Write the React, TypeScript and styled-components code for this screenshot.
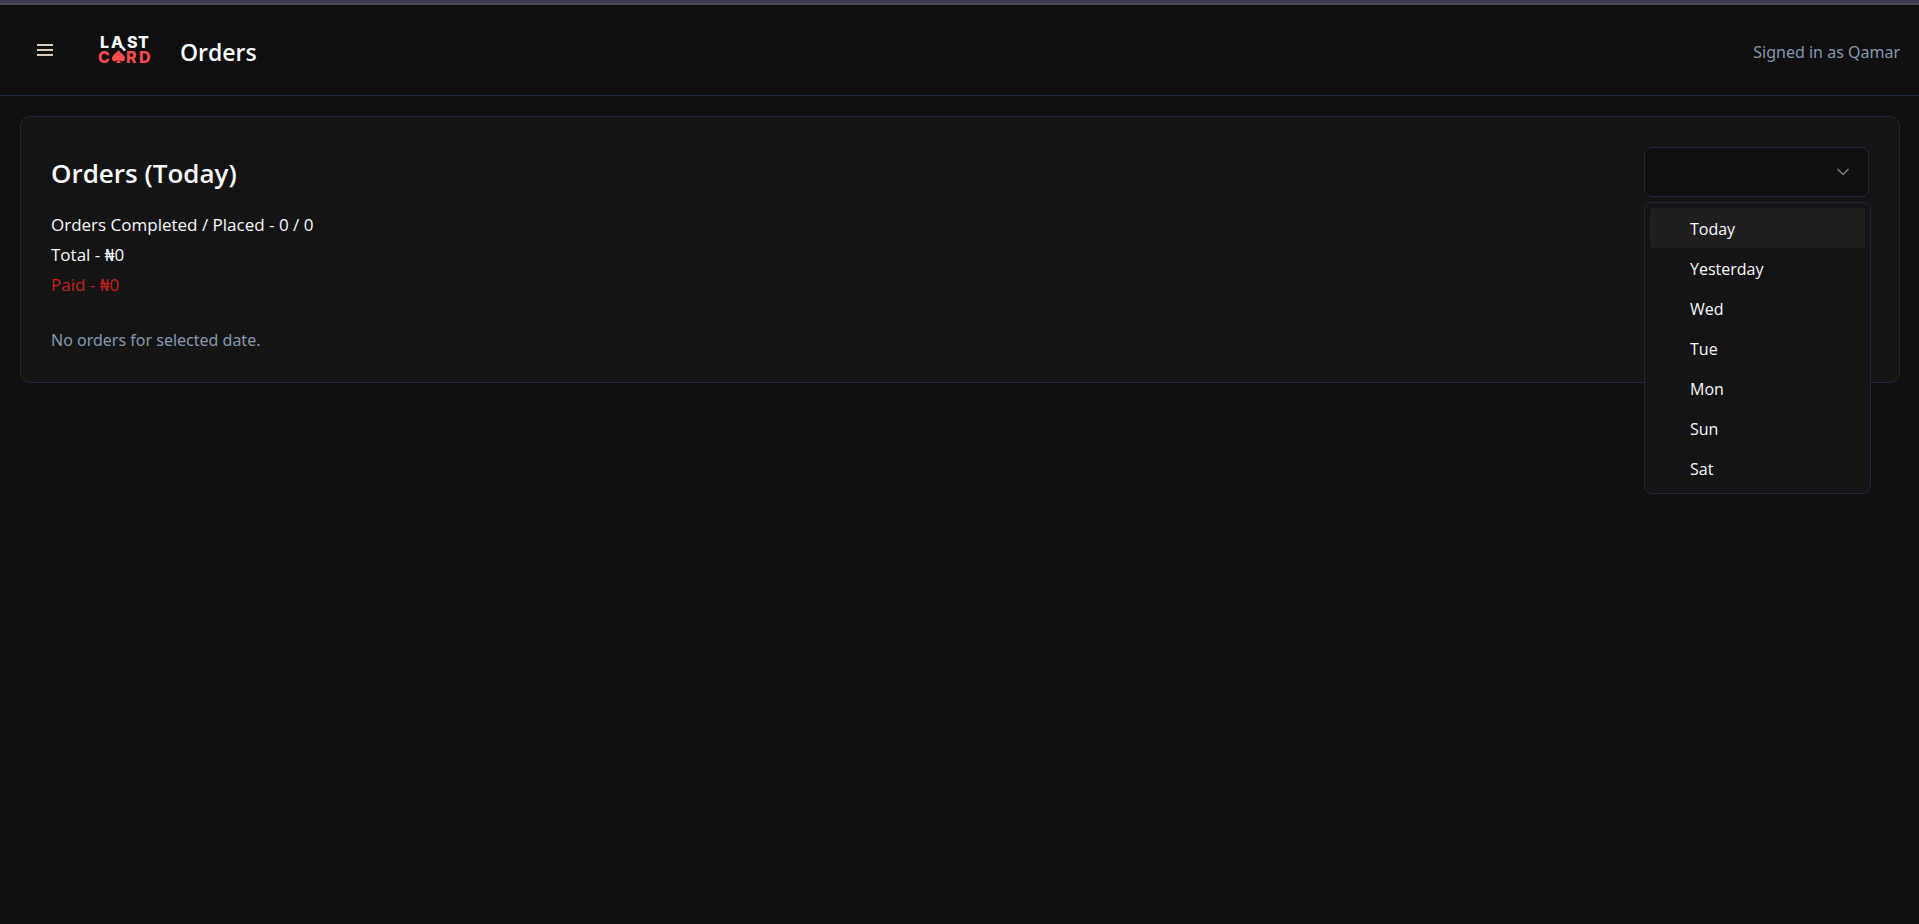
import React, { useState } from 'react';
import styled, { createGlobalStyle } from 'styled-components';

const color = {
  page: '#0f0f0f',
  card: '#141414',
  active: '#211e1f',
  border: '#1e293b',
  text: '#f8fafc',
  muted: '#8399b2',
  danger: '#c5221f',
  accent: '#d9ccb4',
  red: '#fb4b4e',
};

const GlobalStyle = createGlobalStyle`
  *, *::before, *::after { box-sizing: border-box; }
  body {
    margin: 0;
    background: ${color.page};
    color: ${color.text};
    font: 400 17px/30px "Segoe UI", "Open Sans", "Noto Sans", sans-serif;
  }
  button, select { font: inherit; color: inherit; }
  h1, h2, p, ul { margin: 0; padding: 0; }
`;

const Page = styled.div`
  min-height: 100vh;
  border-top: 3px solid #3d3b50;
`;

const Header = styled.header`
  display: flex;
  align-items: center;
  height: 93px;
  padding: 0 19px 0 20px;
  border-top: 2px solid #49484f;
  border-bottom: 1px solid ${color.border};
`;

const MenuButton = styled.button`
  display: flex;
  align-items: center;
  justify-content: center;
  width: 50px;
  height: 50px;
  padding: 0;
  border: 0;
  background: none;
  color: ${color.accent};
  cursor: pointer;
`;

const LogoLink = styled.a`
  display: flex;
  margin: 0 22px 0 25px;
`;

const LogoText = styled.text<{ $red?: boolean }>`
  font: 800 16px Inter, sans-serif;
  fill: ${(p) => (p.$red ? color.red : color.text)};
`;

const PageTitle = styled.h1`
  margin-right: auto;
  padding-top: 3px;
  font-size: 23px;
  font-weight: 600;
  line-height: 36px;
`;

const Muted = styled.p`
  padding-top: 3px;
  color: ${color.muted};
  font-family: "Segoe UI", "Noto Sans", sans-serif;
  font-size: 16px;
  line-height: 24px;
`;

const Main = styled.main`
  padding: 20px 19px 20px 20px;
`;

const Card = styled.section`
  padding: 30px;
  border: 1px solid ${color.border};
  border-radius: 10px;
  background: ${color.card};
`;

const CardHeader = styled.div`
  display: flex;
  align-items: center;
  justify-content: space-between;
`;

const CardTitle = styled.h2`
  padding-top: 2px;
  font-size: 26px;
  font-weight: 600;
  line-height: 36px;
`;

const Stats = styled.div`
  margin: 13px 0 25px;
`;

const Stat = styled.p<{ $danger?: boolean }>`
  color: ${(p) => (p.$danger ? color.danger : color.text)};
`;

const Picker = styled.div`
  position: relative;
  width: 225px;
`;

const PickerSelect = styled.select`
  display: block;
  width: 100%;
  height: 50px;
  padding: 0 15px;
  border: 1px solid ${color.border};
  border-radius: 8px;
  background: ${color.page};
  appearance: none;
  cursor: pointer;
`;

const Chevron = styled.svg`
  position: absolute;
  top: 15px;
  right: 16px;
  color: ${color.accent};
  opacity: 0.55;
  pointer-events: none;
`;

const Menu = styled.ul`
  position: absolute;
  z-index: 10;
  top: 55px;
  left: 0;
  width: 227px;
  padding: 5px;
  border: 1px solid ${color.border};
  border-radius: 8px;
  background: ${color.card};
  list-style: none;
`;

const MenuItem = styled.button<{ $active?: boolean }>`
  display: block;
  width: 100%;
  height: 40px;
  padding: 2px 10px 0 40px;
  border: 0;
  border-radius: 4px;
  background: ${(p) => (p.$active ? color.active : 'transparent')};
  font-size: 16px;
  line-height: 24px;
  text-align: left;
  cursor: pointer;
`;

const days = ['Today', 'Yesterday', 'Wed', 'Tue', 'Mon', 'Sun', 'Sat'];

function Logo() {
  return (
    <svg width="63" height="40" viewBox="0 0 63 40" role="img" aria-label="Last Card">
      <LogoText x="5 16 32 43" y="18">LAST</LogoText>
      <path d="M26.500 16.500l3.500 4" stroke={color.text} strokeWidth="2.500" />
      <LogoText $red x="3" y="33">C</LogoText>
      <path
        fill={color.red}
        d="M23.500 20C22 23 17 25 17 28.500c0 3.400 4 3.800 5.500 1.600 0 1.200-.6 2.200-1.600 2.900h5.200c-1-.7-1.600-1.700-1.600-2.900C26 32.300 30 31.900 30 28.500c0-3.500-5-5.500-6.500-8.500z"
      />
      <LogoText $red x="31 44" y="33">RD</LogoText>
    </svg>
  );
}

export default function App() {
  const [open, setOpen] = useState(true);
  const [day, setDay] = useState('');
  const [active, setActive] = useState('Today');

  const choose = (d: string) => {
    setDay(d);
    setOpen(false);
  };

  return (
    <Page>
      <GlobalStyle />
      <Header>
        <MenuButton type="button" aria-label="Open menu">
          <svg width="20" height="20" viewBox="0 0 20 20" stroke="currentColor" strokeWidth="2" fill="none">
            <path d="M2 5h16M2 10h16M2 15h16" />
          </svg>
        </MenuButton>
        <LogoLink href="#" aria-label="Last Card">
          <Logo />
        </LogoLink>
        <PageTitle>Orders</PageTitle>
        <Muted>Signed in as Qamar</Muted>
      </Header>
      <Main>
        <Card>
          <CardHeader>
            <CardTitle>Orders ({day || 'Today'})</CardTitle>
            <Picker>
              <PickerSelect
                aria-label="Order date"
                value={day}
                onChange={(e) => choose(e.target.value)}
                onMouseDown={(e) => {
                  e.preventDefault();
                  setOpen(!open);
                }}
              >
                <option value="" />
                {days.map((d) => (
                  <option key={d} value={d}>{d}</option>
                ))}
              </PickerSelect>
              <Chevron width="20" height="20" viewBox="0 0 24 24" fill="none" stroke="currentColor" strokeWidth="2" strokeLinecap="round" strokeLinejoin="round" aria-hidden="true">
                <path d="m6 9 6 6 6-6" />
              </Chevron>
              {open && (
                <Menu>
                  {days.map((d) => (
                    <li key={d}>
                      <MenuItem type="button" $active={d === active} onMouseEnter={() => setActive(d)} onClick={() => choose(d)}>
                        {d}
                      </MenuItem>
                    </li>
                  ))}
                </Menu>
              )}
            </Picker>
          </CardHeader>
          <Stats>
            <Stat>Orders Completed / Placed - 0 / 0</Stat>
            <Stat>Total - ₦0</Stat>
            <Stat $danger>Paid - ₦0</Stat>
          </Stats>
          <Muted>No orders for selected date.</Muted>
        </Card>
      </Main>
    </Page>
  );
}
